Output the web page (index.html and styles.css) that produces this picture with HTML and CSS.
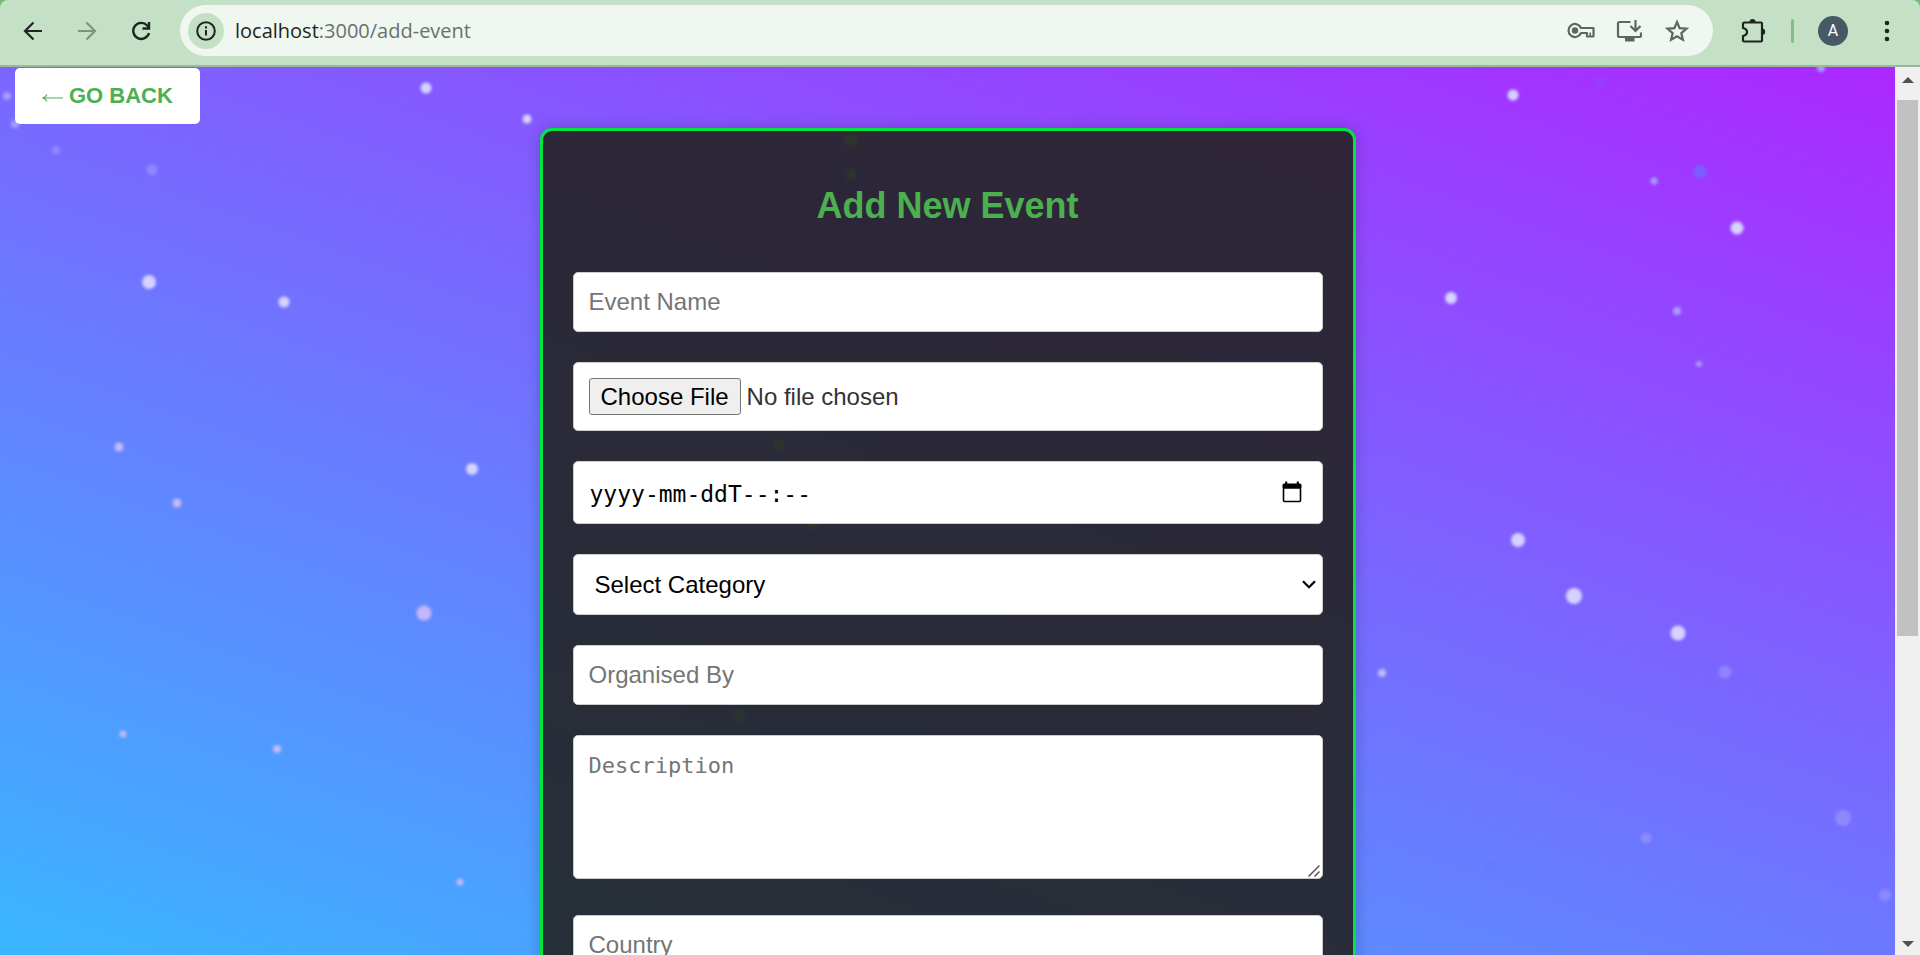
FILE: index.html
```html
<!DOCTYPE html>
<html lang="en">
<head>
<meta charset="utf-8">
<title>Add New Event</title>
<link rel="stylesheet" href="styles.css">
</head>
<body>
<div class="browser">
  <header class="toolbar-wrap">
    <div class="toolbar">
      <nav class="nav-buttons">
        <button class="tool" type="button" aria-label="Back">
          <svg width="20" height="20" viewBox="0 0 20 20" fill="none" stroke="#1f2420" stroke-width="2.2"><path d="M19 10H2.5M10.500 1.500L2 10l8.500 8.500"/></svg>
        </button>
        <button class="tool" type="button" aria-label="Forward">
          <svg width="20" height="20" viewBox="0 0 20 20" fill="none" stroke="#7d9480" stroke-width="2.200"><path d="M1 10h16.500M9.500 1.500L18 10l-8.500 8.500"/></svg>
        </button>
        <button class="tool" type="button" aria-label="Reload">
          <svg width="20" height="20" viewBox="0 0 20 20" fill="none" stroke="#1f2420" stroke-width="2.400"><path d="M18 12a8 8 0 1 1-1.800-7.500L18 6.500"/><path d="M18 1v6.500h-6.500"/></svg>
        </button>
      </nav>
      <div class="address">
        <button class="site-info" type="button" aria-label="Site information">
          <svg width="20" height="20" viewBox="0 0 20 20" fill="none" stroke="#1f2420" stroke-width="2"><circle cx="10" cy="10" r="8.800"/><path d="M10 9v5.500M10 5.200v2.200"/></svg>
        </button>
        <p class="url"><span class="host">localhost</span>:3000/add-event</p>
        <button class="address-icon" type="button" aria-label="Passwords">
          <svg width="28" height="18" viewBox="0 0 28 18" fill="none" stroke="#5f6661" stroke-width="2.200"><path d="M14 6H26.500V14.500H20V11h-6A6.500 6.500 0 1 1 14 6z" stroke-linejoin="round"/><path d="M23.200 10.500v4" stroke-width="1.600"/><circle cx="8" cy="8.500" r="3.200" fill="#5f6661" stroke="none"/></svg>
        </button>
        <button class="address-icon" type="button" aria-label="Install app">
          <svg width="26" height="22" viewBox="0 0 26 22" fill="none" stroke="#5f6661" stroke-width="2.200"><path d="M14.500 2H3.500Q2 2 2 3.500v12Q2 17 3.500 17h20q1.500 0 1.500-1.500V12.500"/><path d="M19.500 0V10.500M14.500 6l5 5 5-5"/><path d="M9 17.500h9.500V21.500H9z" fill="#5f6661" stroke="none"/></svg>
        </button>
        <button class="address-icon" type="button" aria-label="Bookmark">
          <svg width="24" height="24" viewBox="0 0 24 24" fill="none" stroke="#5f6661" stroke-width="2.200"><path d="M12 3l2.600 6.100 6.900.6-5.200 4.400 1.600 6.700-5.900-3.600-5.900 3.600 1.600-6.700-5.200-4.400 6.900-.6z"/></svg>
        </button>
      </div>
      <div class="tool-group">
        <button class="tool" type="button" aria-label="Extensions">
          <svg width="26" height="26" viewBox="0 0 26 26"><path d="M4.500 4.500h16.500q1 0 1 1v17q0 1-1 1h-17q-1 0-1-1v-4.500q4-1 4-4t-4-4v-4q0-1.500 1.500-1.500z" fill="none" stroke="#1f2420" stroke-width="2.200"/><path d="M9.500 4a3 3 0 0 1 6 0zM22 10.500a3.200 3.200 0 0 1 0 6.400z" fill="#1f2420"/></svg>
        </button>
        <span class="divider"></span>
        <button class="avatar" type="button" aria-label="Profile">A</button>
        <button class="tool" type="button" aria-label="Menu">
          <svg width="6" height="24" viewBox="0 0 6 24" fill="#1f2420"><circle cx="3" cy="4" r="2.300"/><circle cx="3" cy="12" r="2.300"/><circle cx="3" cy="20" r="2.300"/></svg>
        </button>
      </div>
    </div>
  </header>

  <div class="viewport">
    <main class="page">
      <svg class="stars" viewBox="0 0 1895 888" preserveAspectRatio="xMinYMin slice" aria-hidden="true">
        <defs><filter id="soft" x="-1" y="-1" width="3" height="3"><feGaussianBlur stdDeviation="1.500"/></filter></defs>
        <g class="star bright">
          <circle cx="426" cy="21" r="5.500"/><circle cx="527" cy="52" r="4.500"/><circle cx="149" cy="215" r="7"/><circle cx="284" cy="235" r="5.500"/><circle cx="472" cy="402" r="6"/>
          <circle cx="1513" cy="28" r="5.500"/><circle cx="1737" cy="161" r="6.500"/><circle cx="1451" cy="231" r="6"/><circle cx="1518" cy="473" r="7"/><circle cx="1574" cy="529" r="8"/><circle cx="1678" cy="566" r="7.500"/>
        </g>
        <g class="star pink">
          <circle cx="424" cy="546" r="7.500"/><circle cx="119" cy="380" r="4.500"/><circle cx="177" cy="436" r="4.500"/><circle cx="123" cy="667" r="3.500"/><circle cx="277" cy="682" r="4"/><circle cx="460" cy="815" r="3.500"/><circle cx="1382" cy="606" r="4"/>
        </g>
        <g class="star blue">
          <circle cx="15" cy="57" r="4"/><circle cx="7" cy="29" r="4"/><circle cx="1654" cy="114" r="3.500"/><circle cx="1677" cy="244" r="4"/><circle cx="1699" cy="297" r="3"/><circle cx="1821" cy="1" r="4"/>
        </g>
        <g class="star faint">
          <circle cx="56" cy="83" r="4"/><circle cx="152" cy="103" r="5.500"/><circle cx="1725" cy="605" r="6.500"/><circle cx="1843" cy="751" r="8"/><circle cx="1646" cy="771" r="5.500"/><circle cx="1885" cy="828" r="6"/>
        </g>
        <g class="star dim">
          <circle cx="1700" cy="105" r="7"/><circle cx="1600" cy="15" r="6" opacity=".3"/><circle cx="1490" cy="799" r="4"/>
        </g>
        <g class="star covered">
          <circle cx="851" cy="73" r="7"/><circle cx="851" cy="107" r="6"/><circle cx="779" cy="378" r="6"/><circle cx="814" cy="457" r="6"/><circle cx="739" cy="649" r="6"/>
        </g>
      </svg>
      <button class="go-back" type="button">
        <svg class="arrow" width="21" height="8" viewBox="0 0 21 8" fill="none" stroke="#4caf50" stroke-width="1.200" aria-hidden="true"><path d="M1 4h20M5 .500Q3.500 3 1 4q2.500 1 4 3.500"/></svg>
        GO BACK
      </button>

      <form class="card">
        <h2 class="title">Add New Event</h2>
        <div class="fields">
          <input class="field" type="text" placeholder="Event Name" aria-label="Event Name">
          <input class="field file" type="file" aria-label="Event image">
          <div class="with-icon">
            <input class="field date" type="text" placeholder="yyyy-mm-ddT--:--" aria-label="Date and time">
            <button class="picker" type="button" aria-label="Open date picker">
              <svg width="20" height="22" viewBox="0 0 20 22"><path d="M1.500 7h17v12.500q0 1-1 1h-15q-1 0-1-1z" fill="none" stroke="#000" stroke-width="1.600"/><path d="M.500 7V4q0-1.500 1.500-1.500h1.200V.5h2v2h9.600v-2h2v2H18q1.500 0 1.500 1.500v3z"/></svg>
            </button>
          </div>
          <div class="with-icon">
            <select class="field select" aria-label="Category"><option>Select Category</option></select>
            <svg class="chevron" width="14" height="9" viewBox="0 0 14 9" fill="none" stroke="#000" stroke-width="2.300"><path d="M1 1.300l6 5.900 6-5.900"/></svg>
          </div>
          <input class="field" type="text" placeholder="Organised By" aria-label="Organised By">
          <div class="textarea-row with-icon">
            <textarea class="field description" placeholder="Description" aria-label="Description"></textarea>
            <svg class="grip" width="12" height="12" viewBox="0 0 12 12" stroke="#555" stroke-width="1.500"><path d="M.500 11.500l11-11M6.500 11.500l5-5"/></svg>
          </div>
          <input class="field" type="text" placeholder="Country" aria-label="Country">
        </div>
      </form>
    </main>

    <div class="scrollbar" aria-hidden="true">
      <svg width="12" height="6" viewBox="0 0 12 6" fill="#505050"><path d="M0 6h12L6 0z"/></svg>
      <div class="track"><div class="thumb"></div></div>
      <svg width="12" height="6" viewBox="0 0 12 6" fill="#505050"><path d="M0 0h12L6 6z"/></svg>
    </div>
  </div>
</div>
</body>
</html>
```
FILE: styles.css
```css
*, *::before, *::after { box-sizing: border-box; }
body { margin: 0; font-family: "Liberation Sans", Arial, sans-serif; }
button { font: inherit; cursor: pointer; }

.browser { display: flex; flex-direction: column; height: 100vh; overflow: hidden; }

/* Browser toolbar */
.toolbar-wrap { flex: none; background: #6fba75; }
.toolbar {
  display: flex; align-items: center;
  padding: 5px 6px 9px;
  background: #c5e1c5;
  border-bottom: 2px solid #9eb59f;
  border-radius: 8px 8px 0 0;
}
.nav-buttons, .tool-group { display: flex; align-items: center; }
.tool {
  display: flex; align-items: center; justify-content: center;
  width: 54px; height: 48px; padding: 0; border: 0; background: none;
}
.address {
  flex: 1; display: flex; align-items: center;
  height: 51px; margin: 0 13px 0 12px; padding: 0 12px 0 8px;
  border-radius: 26px; background: #f0f7f0;
}
.site-info {
  display: flex; align-items: center; justify-content: center;
  width: 36px; height: 36px; padding: 0;
  border: 0; border-radius: 50%; background: #c5e1c5;
}
.url {
  flex: 1; margin: 0 0 0 11px;
  font-family: "Open Sans", "Noto Sans", sans-serif; font-size: 20px; line-height: 28px; color: #6a706b;
}
.host { color: #1f2420; }
.address-icon {
  display: flex; align-items: center; justify-content: center;
  width: 48px; height: 48px; padding: 0; border: 0; background: none;
}
.divider { width: 3px; height: 24px; margin: 0 24px 0 11px; border-radius: 2px; background: #7fbf84; }
.avatar {
  width: 30px; height: 30px; margin-right: 12px; padding: 0;
  border: 0; border-radius: 50%; background: #455a64;
  color: #fff; font-family: Roboto, sans-serif; font-size: 16px; line-height: 30px;
}

/* Page */
.viewport { flex: 1; display: flex; min-height: 0; }
.page {
  position: relative; flex: 1; overflow: hidden;
  background: linear-gradient(19.5deg, #3ab6ff, #ac28ff);
}
.stars { position: absolute; inset: 0; width: 100%; height: 100%; }
.star { filter: url(#soft); }
.bright { fill: #d6d2ff; }
.pink { fill: #c4b8fa; }
.blue { fill: #a79cff; }
.faint { fill: #958fff; opacity: .8; }
.dim { fill: #6a74ff; opacity: .6; }
.covered { fill: #7fd08a; }

.go-back {
  position: relative; display: flex; align-items: center; justify-content: center; gap: 6px;
  height: 56px; margin: 1px 0 0 15px; padding: 0 27px;
  border: 0; border-radius: 5px; background: #fff;
  color: #4caf50; font-size: 22px; font-weight: 700;
}
.arrow { margin-top: 4px; }

.card {
  position: relative; max-width: 816px; margin: 4px auto 0; padding: 30px;
  border: 3px solid #00e640; border-radius: 12px;
  background: rgba(34, 34, 34, .9);
  box-shadow: 0 0 15px rgba(0, 0, 0, .2);
}
.title {
  margin: 24px 0 45px; text-align: center;
  color: #4caf50; font-size: 36px; line-height: 42px;
}
.fields { display: flex; flex-direction: column; gap: 30px; }
.field {
  display: block; width: 100%; height: 60px; margin: 0; padding: 15px;
  border: 1px solid #ccc; border-radius: 5px; outline: 0;
  background: #fff; color: #000;
  font-family: "Liberation Sans", Arial, sans-serif; font-size: 24px;
}
.field::placeholder { color: #757575; opacity: 1; }
.file { height: 69px; color: #333; }
.file::file-selector-button {
  height: 37px; margin: 0 6px 0 0; padding: 0 11px;
  border: 1px solid #767676; border-radius: 3px; background: #efefef; color: #000;
  font: inherit;
}
.with-icon { position: relative; }
.date { height: 63px; padding: 16px 16px 14px; font-family: "DejaVu Sans Mono", monospace; font-size: 23px; }
.date::placeholder { color: #000; }
.picker {
  position: absolute; right: 21px; top: 20px;
  display: flex; padding: 0; border: 0; background: none;
}
.select { height: 61px; padding: 0 21px; appearance: none; }
.chevron { position: absolute; right: 7px; top: 26px; pointer-events: none; }
.textarea-row { padding-bottom: 6px; }
.description {
  height: 144px; padding-top: 17px; resize: none;
  font-family: "DejaVu Sans Mono", monospace; font-size: 22px;
}
.grip { position: absolute; right: 3px; top: 130px; pointer-events: none; }

/* Scrollbar */
.scrollbar {
  flex: none; display: flex; flex-direction: column; align-items: center;
  width: 25px; padding: 10px 0 8px; background: #f0f0f0;
}
.scrollbar svg { flex: none; }
.track { flex: 1; align-self: stretch; margin: 17px 2px; }
.thumb { height: 65%; background: #c1c1c1; }
```
